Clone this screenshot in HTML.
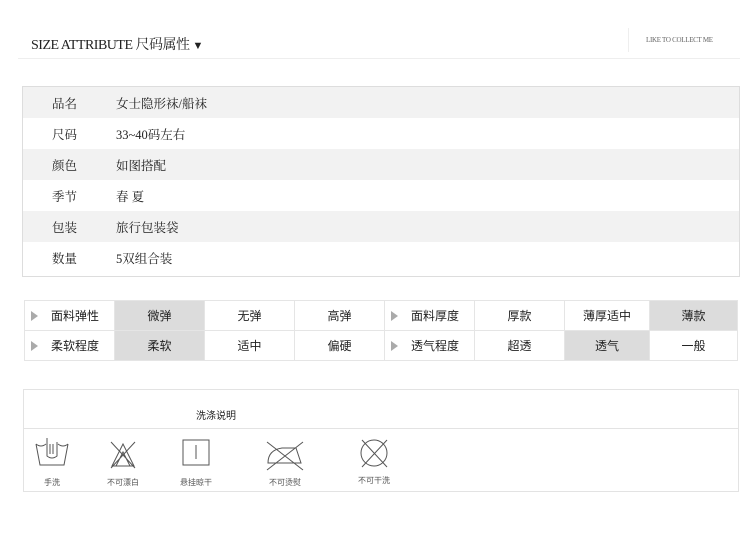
<!DOCTYPE html>
<html><head><meta charset="utf-8"><style>
body{margin:0;width:750px;height:551px;background:#fff;font-family:"Liberation Serif","Noto Serif CJK SC",serif;color:#222;position:relative;overflow:hidden}
.a{position:absolute}
.t1{left:31px;top:34px;font-size:14px;letter-spacing:-0.5px}
.tbl{left:22px;top:86px;width:716px;height:189px;border:1px solid #ddd}
.row{height:31px;position:relative;font-size:12.5px}
.row span{position:absolute;top:7px}
.g{background:#f2f2f2}
.attr{left:24px;top:300px;border-collapse:collapse;font-size:12px;font-family:"Liberation Sans","Noto Sans CJK SC",sans-serif}
.attr td{border:1px solid #e5e5e5;height:29px;text-align:center;padding:0}
.attr td.h{background:#dcdcdc}
.attr td.l{text-align:left;padding-left:6px}
.attr td.l:before{content:"";display:inline-block;border-left:7px solid #aaa;border-top:5px solid transparent;border-bottom:5px solid transparent;margin-right:13px;vertical-align:-1px}
.wash{left:23px;top:389px;width:714px;height:101px;border:1px solid #e3e3e3;font-family:"Liberation Sans","Noto Sans CJK SC",sans-serif}
.lab{position:absolute;top:87px;font-size:8px;color:#555;transform:translateX(-50%)}
</style></head><body>
<div class="a t1">SIZE ATTRIBUTE 尺码属性 <span style="font-size:11px">▼</span></div>
<div class="a" style="left:628px;top:28px;width:1px;height:24px;background:#eee"></div>
<div class="a" style="left:646px;top:36px;font-size:7px;color:#666;letter-spacing:-0.3px">LIKE TO COLLECT ME</div>
<div class="a" style="left:18px;top:58px;width:722px;height:1px;background:#eee"></div>
<div class="a tbl">
<div class="row g"><span style="left:29px">品名</span><span style="left:93px">女士隐形袜/船袜</span></div>
<div class="row"><span style="left:29px">尺码</span><span style="left:93px">33~40码左右</span></div>
<div class="row g"><span style="left:29px">颜色</span><span style="left:93px">如图搭配</span></div>
<div class="row"><span style="left:29px">季节</span><span style="left:93px">春 夏</span></div>
<div class="row g"><span style="left:29px">包装</span><span style="left:93px">旅行包装袋</span></div>
<div class="row"><span style="left:29px">数量</span><span style="left:93px">5双组合装</span></div>
</div>
<table class="a attr">
<tr><td class="l" style="width:83px">面料弹性</td><td class="h" style="width:89px">微弹</td><td style="width:89px">无弹</td><td style="width:89px">高弹</td><td class="l" style="width:83px">面料厚度</td><td style="width:89px">厚款</td><td style="width:84px">薄厚适中</td><td class="h" style="width:87px">薄款</td></tr>
<tr><td class="l">柔软程度</td><td class="h">柔软</td><td>适中</td><td>偏硬</td><td class="l">透气程度</td><td>超透</td><td class="h">透气</td><td>一般</td></tr>
</table>
<div class="a wash">
<div class="a" style="left:0;top:38px;width:714px;height:1px;background:#e3e3e3"></div>
<div class="a" style="left:172px;top:17px;font-size:10px">洗涤说明</div>
<svg class="a" style="left:0;top:40px" width="420" height="50" fill="none" stroke="#555" stroke-width="1">
<path d="M12 14 L16 35 H40 L44 14 M12 14 q5 4 10 0 M34 14 q5 4 10 0 M23 8 v18 q5 4 10 0 v-14 M26 14v10 M29 14v10"/>
<path d="M88 36 L99 14 L110 36 Z M92 36 L99 22 L106 36 M87 12 L111 38 M111 12 L87 38"/>
<rect x="159" y="10" width="26" height="25"/><path d="M172 15v14"/>
<path d="M244 33 q0 -13 14 -15 h14 l5 15 Z M243 12 L279 40 M279 12 L243 40"/>
<circle cx="350" cy="23" r="13"/><path d="M338 10 L363 37 M363 10 L338 37"/>
</svg>
<div class="lab" style="left:28px">手洗</div>
<div class="lab" style="left:99px">不可漂白</div>
<div class="lab" style="left:172px">悬挂晾干</div>
<div class="lab" style="left:261px">不可烫熨</div>
<div class="lab" style="left:350px;top:85px">不可干洗</div>
</div>
</body></html>
